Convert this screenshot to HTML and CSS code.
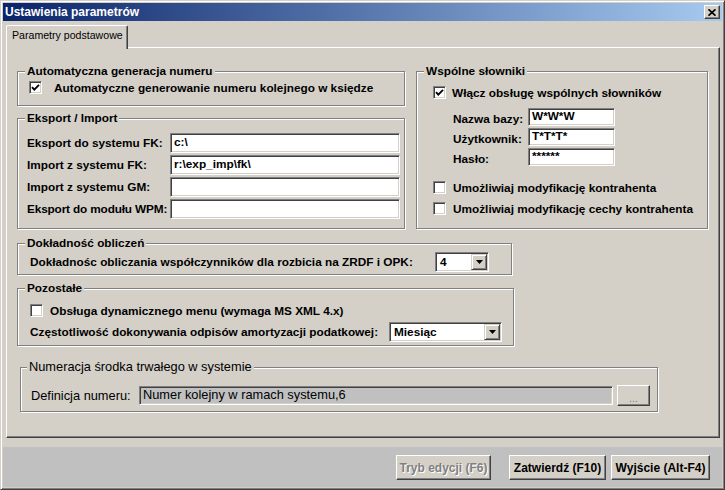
FILE: index.html
```html
<!DOCTYPE html>
<html lang="pl">
<head>
<meta charset="utf-8">
<title>Ustawienia parametrów</title>
<link rel="stylesheet" href="styles.css">
</head>
<body>
<div class="window">
  <div class="titlebar">
    <span class="title">Ustawienia parametrów</span>
    <span class="close"><svg width="8" height="7" viewBox="0 0 8 7"><path d="M0.5 0.3 L7.5 6.7 M7.5 0.3 L0.5 6.7" stroke="#000" stroke-width="1.7" fill="none"/></svg></span>
  </div>
  <div class="tabs"><div class="tab">Parametry podstawowe</div></div>
  <div class="panel">
    <div class="top-row">
      <div class="left-col">
        <fieldset class="group g-auto">
          <legend>Automatyczna generacja numeru</legend>
          <div class="body">
            <div class="check wide"><span class="cb"><svg width="9" height="9" viewBox="0 0 9 9"><path d="M1 4.2 L3.3 6.6 L8 1.8" stroke="#000" stroke-width="1.9" fill="none"/></svg></span>Automatyczne generowanie numeru kolejnego w księdze</div>
          </div>
        </fieldset>
        <fieldset class="group g-export">
          <legend>Eksport / Import</legend>
          <div class="body">
            <span class="lbl">Eksport do systemu FK:</span><span class="field">c:\</span>
            <span class="lbl">Import z systemu FK:</span><span class="field">r:\exp_imp\fk\</span>
            <span class="lbl">Import z systemu GM:</span><span class="field"></span>
            <span class="lbl tight">Eksport do modułu WPM:</span><span class="field"></span>
          </div>
        </fieldset>
      </div>
      <fieldset class="group g-dict">
        <legend>Wspólne słowniki</legend>
        <div class="body">
          <div class="check"><span class="cb"><svg width="9" height="9" viewBox="0 0 9 9"><path d="M1 4.2 L3.3 6.6 L8 1.8" stroke="#000" stroke-width="1.9" fill="none"/></svg></span>Włącz obsługę wspólnych słowników</div>
          <div class="dict-fields">
            <span class="lbl">Nazwa bazy:</span><span class="field">W*W*W</span>
            <span class="lbl">Użytkownik:</span><span class="field">T*T*T*</span>
            <span class="lbl">Hasło:</span><span class="field">******</span>
          </div>
          <div class="dict-checks">
            <div class="check"><span class="cb"></span>Umożliwiaj modyfikację kontrahenta</div>
            <div class="check"><span class="cb"></span>Umożliwiaj modyfikację cechy kontrahenta</div>
          </div>
        </div>
      </fieldset>
    </div>
    <fieldset class="group g-prec">
      <legend>Dokładność obliczeń</legend>
      <div class="body">
        <span class="lbl">Dokładnośc obliczania współczynników dla rozbicia na ZRDF i OPK:</span>
        <span class="select s-prec"><span class="val">4</span><span class="arrow"><svg width="7" height="4" viewBox="0 0 7 4"><path d="M0 0h7l-3.5 4z" fill="#000"/></svg></span></span>
      </div>
    </fieldset>
    <fieldset class="group g-other">
      <legend>Pozostałe</legend>
      <div class="body">
        <div class="check"><span class="cb"></span>Obsługa dynamicznego menu (wymaga MS XML 4.x)</div>
        <div class="row">
          <span class="lbl">Częstotliwość dokonywania odpisów amortyzacji podatkowej:</span>
          <span class="select s-freq"><span class="val">Miesiąc</span><span class="arrow"><svg width="7" height="4" viewBox="0 0 7 4"><path d="M0 0h7l-3.5 4z" fill="#000"/></svg></span></span>
        </div>
      </div>
    </fieldset>
    <fieldset class="group g-num">
      <legend>Numeracja środka trwałego w systemie</legend>
      <div class="body">
        <span class="lbl">Definicja numeru:</span>
        <span class="field ro">Numer kolejny w ramach systemu,6</span>
        <span class="btn dots">...</span>
      </div>
    </fieldset>
  </div>
  <div class="buttonbar">
    <span class="btn disabled b-edit">Tryb edycji (F6)</span>
    <span class="btn b-ok">Zatwierdź (F10)</span>
    <span class="btn b-exit">Wyjście (Alt-F4)</span>
  </div>
</div>
</body>
</html>
```
FILE: styles.css
```css
html, body {
  margin: 0;
  padding: 0;
  background: #d4d0c8;
}
body {
  font-family: "Liberation Sans", Arial, sans-serif;
  color: #000;
}
.window {
  width: 725px;
  height: 490px;
  box-sizing: border-box;
  border: 1px solid;
  border-color: #d4d0c8 #404040 #404040 #d4d0c8;
  box-shadow: inset 1px 1px 0 #fff, inset -1px -1px 0 #808080;
  padding: 2px;
  display: flex;
  flex-direction: column;
  background: #d4d0c8;
}
.titlebar {
  height: 18px;
  flex: none;
  background: linear-gradient(to right, #0a246a, #a6caf0);
  display: flex;
  align-items: center;
  justify-content: space-between;
  padding: 0 2px 0 2px;
  color: #fff;
  font-weight: bold;
  font-size: 12px;
}
.close {
  width: 16px;
  height: 14px;
  box-sizing: border-box;
  background: #d4d0c8;
  border: 1px solid;
  border-color: #fff #404040 #404040 #fff;
  box-shadow: inset -1px -1px 0 #808080;
  display: flex;
  align-items: center;
  justify-content: center;
}
.tabs {
  display: flex;
  margin-top: 4px;
  padding-left: 3px;
  flex: none;
}
.tab {
  width: 122px;
  height: 24px;
  box-sizing: border-box;
  margin-bottom: -2px;
  border: 1px solid;
  border-bottom: none;
  border-color: #fff #404040 transparent #fff;
  box-shadow: inset -1px 0 0 #808080;
  border-radius: 2px 2px 0 0;
  padding: 0 0 0 5px;
  font-size: 10.6px;
  line-height: 19px;
  white-space: nowrap;
  overflow: hidden;
  background: #d4d0c8;
  position: relative;
  z-index: 1;
}
.panel {
  height: 391px;
  flex: none;
  box-sizing: border-box;
  margin: 0 2px 0 3px;
  border: 1px solid;
  border-color: #fff #404040 #404040 #fff;
  box-shadow: inset -1px -1px 0 #808080;
  padding: 16px 11px 0 10px;
}
.group {
  margin: 0;
  padding: 0;
  min-width: 0;
  box-sizing: border-box;
  border: 1px solid #808080;
  box-shadow: 1px 1px 0 #fff, inset 1px 1px 0 #fff;
  font-size: 11.8px;
  font-weight: bold;
}
.group legend {
  margin-left: 7px;
  padding: 0 2px;
  line-height: 14px;
  background: #d4d0c8;
}
.top-row {
  display: flex;
  gap: 11px;
}
.left-col {
  width: 388px;
  display: flex;
  flex-direction: column;
  gap: 5px;
}
.check {
  display: flex;
  align-items: center;
  height: 19px;
  white-space: nowrap;
}
.cb {
  width: 13px;
  height: 13px;
  box-sizing: border-box;
  background: #fff;
  border: 1px solid;
  border-color: #808080 #fff #fff #808080;
  box-shadow: inset 1px 1px 0 #404040, inset -1px -1px 0 #d4d0c8;
  flex: none;
  display: flex;
  align-items: center;
  justify-content: center;
  margin-right: 7px;
}
.cb svg { display: block; }
.field {
  display: block;
  background: #fff;
  border: 1px solid;
  border-color: #808080 #fff #fff #808080;
  box-shadow: inset 1px 1px 0 #404040, inset -1px -1px 0 #d4d0c8;
  box-sizing: border-box;
  padding-left: 3px;
  white-space: nowrap;
  overflow: hidden;
}
.lbl {
  white-space: nowrap;
  display: flex;
  align-items: center;
}
.lbl.tight { letter-spacing: -0.15px; }
/* group 1 */
.g-auto .body {
  padding: 0 0 8px 11px;
}
.g-auto .cb { margin-right: 12px; }
/* group 2 */
.g-export .body {
  display: grid;
  grid-template-columns: 143px 230px;
  grid-auto-rows: 20px;
  row-gap: 2px;
  padding: 8px 4px 9px 9px;
}
.g-export .field { line-height: 17px; }
/* group 3 */
.g-dict {
  width: 292px;
}
.g-dict .body {
  padding: 5px 0 0 16px;
}
.g-dict .cb { margin-right: 6px; }
.dict-fields {
  display: grid;
  grid-template-columns: 75px 87px;
  grid-auto-rows: 18px;
  row-gap: 2px;
  margin-top: 6px;
  padding-left: 20px;
}
.dict-fields .lbl { padding-top: 4px; }
.dict-fields .field { line-height: 15px; }
.dict-checks {
  margin-top: 12px;
  display: flex;
  flex-direction: column;
  gap: 2px;
}
.dict-checks .cb { margin-right: 7px; }
/* select */
.select {
  display: flex;
  background: #fff;
  border: 1px solid;
  border-color: #808080 #fff #fff #808080;
  box-shadow: inset 1px 1px 0 #404040, inset -1px -1px 0 #d4d0c8;
  box-sizing: border-box;
  height: 20px;
  padding: 1px;
}
.select .val {
  flex: 1;
  padding-left: 3px;
  line-height: 16px;
}
.select .arrow {
  width: 16px;
  height: 16px;
  box-sizing: border-box;
  background: #d4d0c8;
  border: 1px solid;
  border-color: #d4d0c8 #404040 #404040 #d4d0c8;
  box-shadow: inset 1px 1px 0 #fff, inset -1px -1px 0 #808080;
  display: flex;
  align-items: center;
  justify-content: center;
}
.select .arrow svg { display: block; }
/* group 4 */
.g-prec {
  width: 495px;
  margin-top: 7px;
}
.g-prec .body {
  display: flex;
  padding: 2px 0 2px 12px;
}
.g-prec .lbl { width: 405px; }
.s-prec { width: 54px; }
/* group 5 */
.g-other {
  width: 497px;
  margin-top: 6px;
}
.g-other .body {
  padding: 6px 0 3px 12px;
}
.g-other .row {
  display: flex;
  margin-top: 2px;
}
.g-other .lbl { width: 359px; }
.s-freq { width: 113px; }
/* group 6 */
.g-num {
  width: 638px;
  margin: 14px 0 0 3px;
  font-weight: normal;
  font-size: 12.8px;
}
.g-num legend { margin-left: 6px; }
.g-num .body {
  display: flex;
  align-items: center;
  padding: 11px 0 5px 10px;
}
.g-num .lbl { width: 108px; }
.g-num .field.ro {
  width: 474px;
  height: 19px;
  line-height: 16px;
  background: #c0c0c0;
}
/* buttons */
.btn {
  box-sizing: border-box;
  background: #d4d0c8;
  border: 1px solid;
  border-color: #fff #404040 #404040 #fff;
  box-shadow: inset -1px -1px 0 #808080;
  display: flex;
  align-items: center;
  justify-content: center;
  white-space: nowrap;
}
.dots {
  width: 33px;
  height: 21px;
  margin-left: 4px;
  color: #808080;
  font-size: 11px;
  padding-top: 4px;
}
.buttonbar {
  margin-top: 9px;
  height: 40px;
  flex: none;
  box-sizing: border-box;
  background: #c0c0c0;
  display: flex;
  justify-content: flex-end;
  align-items: flex-start;
  gap: 5px;
  padding: 8px 12px 0 0;
}
.buttonbar .btn {
  height: 25px;
  font-size: 12px;
  font-weight: bold;
}
.b-edit {
  width: 95px;
  margin-right: 13px;
}
.b-ok { width: 97px; }
.b-exit { width: 99px; }
.disabled {
  color: #808080;
  text-shadow: 1px 1px 0 #fff;
}
```
